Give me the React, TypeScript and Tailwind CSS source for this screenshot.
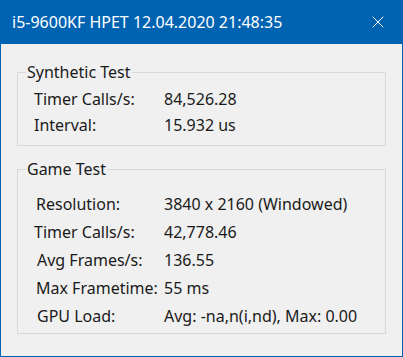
import { X } from "lucide-react";

const synthetic = [
  { label: "Timer Calls/s:", value: "84,526.28", pad: "pl-[16px]" },
  { label: "Interval:", value: "15.932 us", pad: "pl-[16px]" },
];

const game = [
  { label: "Resolution:", value: "3840 x 2160 (Windowed)", pad: "pl-[18px]" },
  { label: "Timer Calls/s:", value: "42,778.46", pad: "pl-[16px]" },
  { label: "Avg Frames/s:", value: "136.55", pad: "pl-[19px]" },
  { label: "Max Frametime:", value: "55 ms", pad: "pl-[18px]" },
  { label: "GPU Load:", value: "Avg: -na,n(i,nd), Max: 0.00", pad: "pl-[19px]" },
];

type Row = { label: string; value: string; pad: string };

function GroupBox({
  title,
  rows,
  rowH,
  body,
}: {
  title: string;
  rows: Row[];
  rowH: string;
  body: string;
}) {
  return (
    <fieldset className="mx-[16px] border border-[#d9d9d9] px-[8px]">
      <legend className="px-[1px] leading-[20px]">{title}</legend>
      <div className={`-mx-[8px] ${body}`}>
        {rows.map((r) => (
          <div key={r.label} className={`flex items-center ${rowH}`}>
            <span className={`w-[146px] shrink-0 ${r.pad}`}>{r.label}</span>
            <span>{r.value}</span>
          </div>
        ))}
      </div>
    </fieldset>
  );
}

export default function App() {
  return (
    <div
      className="flex h-[357px] w-[403px] flex-col border border-t-0 border-[#0063b1] bg-[#f0f0f0] text-[16px] text-[#1a1a1a]"
      style={{ fontFamily: '"Noto Sans", "Open Sans", sans-serif' }}
    >
      <div className="flex h-[44px] shrink-0 items-center justify-between bg-[#0063b1] pl-[11px] pr-[14px] text-white">
        <span className="text-[16px]">i5-9600KF HPET 12.04.2020 21:48:35</span>
        <X className="size-[20px]" strokeWidth={1.2} />
      </div>
      <div className="flex flex-col gap-[13px] pt-[18px]">
        <GroupBox title="Synthetic Test" rows={synthetic} rowH="h-[26px]" body="pt-[4px] pb-[7px]" />
        <GroupBox title="Game Test" rows={game} rowH="h-[28px]" body="pt-[11px] pb-[3px]" />
      </div>
    </div>
  );
}
